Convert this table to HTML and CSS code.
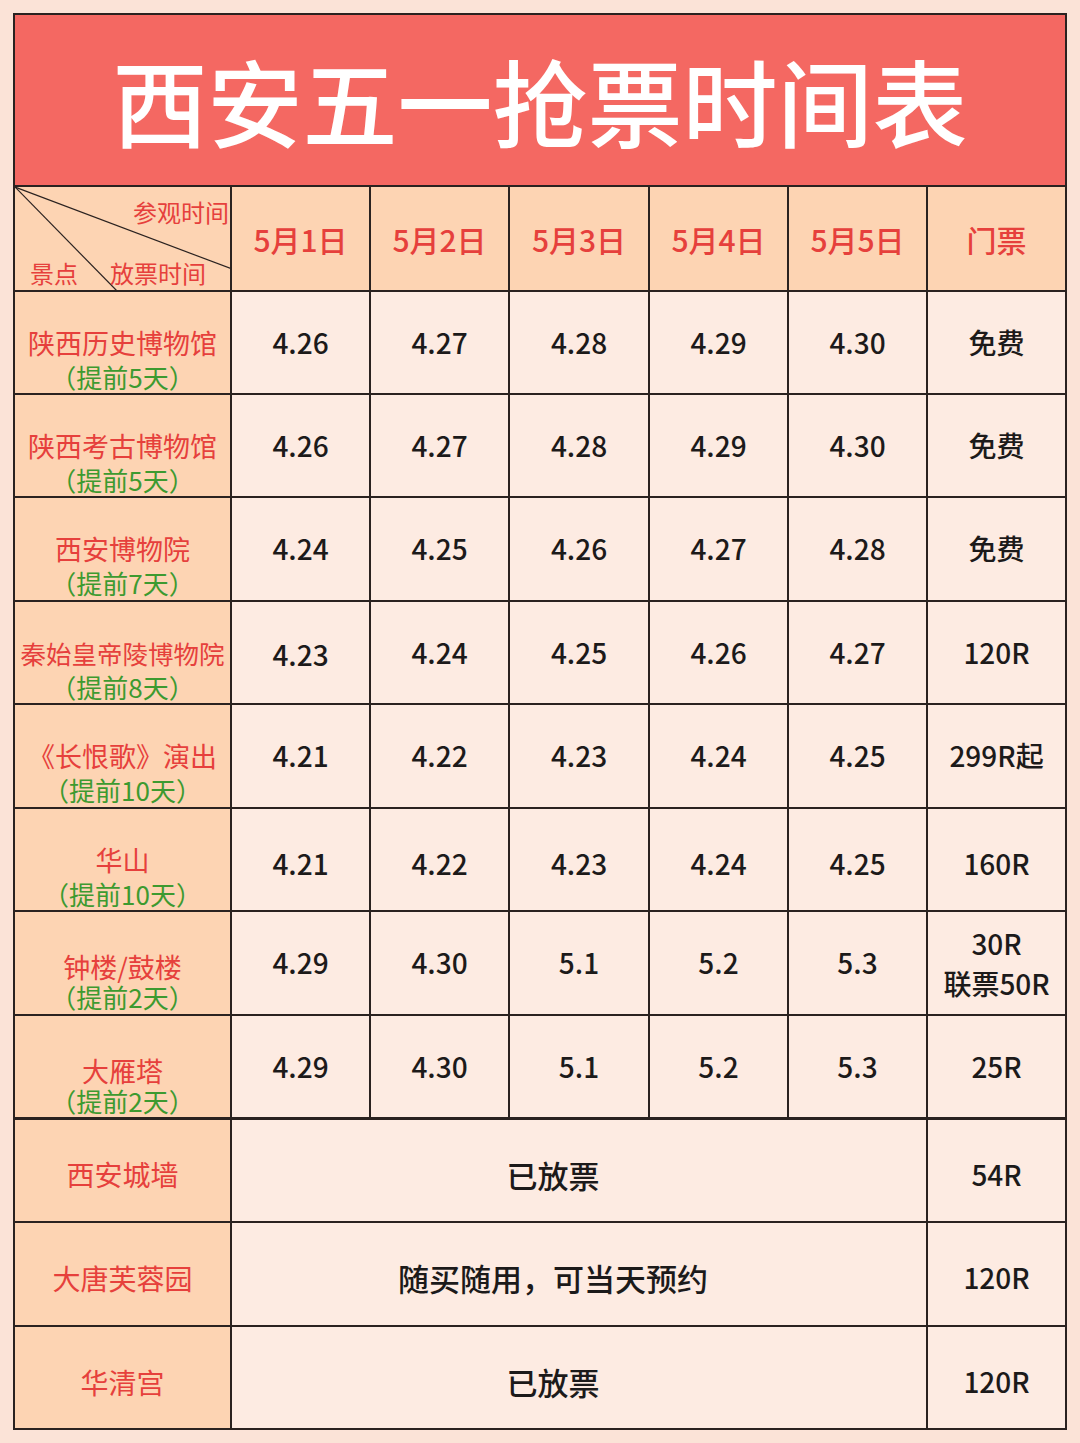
FILE: index.html
```html
<!DOCTYPE html>
<html lang="zh">
<head>
<meta charset="utf-8">
<link rel="stylesheet" href="styles.css">
</head>
<body>
<div class="page">
<table class="sheet">
  <colgroup>
    <col class="c-name"><col class="c-d"><col class="c-d"><col class="c-d4"><col class="c-d"><col class="c-d"><col class="c-d">
  </colgroup>
  <tr class="r-title"><td colspan="7" class="title">西安五一抢票时间表</td></tr>
  <tr class="r-head">
    <td class="corner">
      <svg class="diag" viewBox="0 0 217 105" preserveAspectRatio="none" width="217" height="105">
        <line x1="0" y1="0" x2="217" y2="82" stroke="#2a2220" stroke-width="1.2"/>
        <line x1="0" y1="0" x2="103" y2="105" stroke="#2a2220" stroke-width="1.2"/>
      </svg>
      <span class="lab lab-visit">参观时间</span>
      <span class="lab lab-spot">景点</span>
      <span class="lab lab-open">放票时间</span>
    </td>
    <td class="hd">5月1日</td><td class="hd">5月2日</td><td class="hd">5月3日</td><td class="hd">5月4日</td><td class="hd">5月5日</td><td class="hd">门票</td>
  </tr>
  <tr class="r103">
    <td class="name"><div class="nm">陕西历史博物馆</div><div class="adv">（提前5天）</div></td>
    <td class="v">4.26</td><td class="v">4.27</td><td class="v">4.28</td><td class="v">4.29</td><td class="v">4.30</td><td class="v">免费</td>
  </tr>
  <tr class="r103">
    <td class="name"><div class="nm">陕西考古博物馆</div><div class="adv">（提前5天）</div></td>
    <td class="v">4.26</td><td class="v">4.27</td><td class="v">4.28</td><td class="v">4.29</td><td class="v">4.30</td><td class="v">免费</td>
  </tr>
  <tr class="r104">
    <td class="name"><div class="nm">西安博物院</div><div class="adv">（提前7天）</div></td>
    <td class="v">4.24</td><td class="v">4.25</td><td class="v">4.26</td><td class="v">4.27</td><td class="v">4.28</td><td class="v">免费</td>
  </tr>
  <tr class="r103">
    <td class="name"><div class="nm nm-long">秦始皇帝陵博物院</div><div class="adv">（提前8天）</div></td>
    <td class="v v-low">4.23</td><td class="v">4.24</td><td class="v">4.25</td><td class="v">4.26</td><td class="v">4.27</td><td class="v">120R</td>
  </tr>
  <tr class="r104">
    <td class="name"><div class="nm">《长恨歌》演出</div><div class="adv">（提前10天）</div></td>
    <td class="v">4.21</td><td class="v">4.22</td><td class="v">4.23</td><td class="v">4.24</td><td class="v">4.25</td><td class="v">299R起</td>
  </tr>
  <tr class="r103">
    <td class="name"><div class="nm">华山</div><div class="adv">（提前10天）</div></td>
    <td class="v v-lower">4.21</td><td class="v v-lower">4.22</td><td class="v v-lower">4.23</td><td class="v v-lower">4.24</td><td class="v v-lower">4.25</td><td class="v v-lower">160R</td>
  </tr>
  <tr class="r104">
    <td class="name tight"><div class="nm">钟楼/鼓楼</div><div class="adv">（提前2天）</div></td>
    <td class="v">4.29</td><td class="v">4.30</td><td class="v">5.1</td><td class="v">5.2</td><td class="v">5.3</td><td class="v two">30R<br>联票50R</td>
  </tr>
  <tr class="r103 thick">
    <td class="name tight"><div class="nm">大雁塔</div><div class="adv">（提前2天）</div></td>
    <td class="v">4.29</td><td class="v">4.30</td><td class="v">5.1</td><td class="v">5.2</td><td class="v">5.3</td><td class="v">25R</td>
  </tr>
  <tr class="r104 low-row">
    <td class="name single">西安城墙</td>
    <td class="v wide" colspan="5">已放票</td><td class="v">54R</td>
  </tr>
  <tr class="r104 low-row">
    <td class="name single">大唐芙蓉园</td>
    <td class="v wide" colspan="5">随买随用，可当天预约</td><td class="v">120R</td>
  </tr>
  <tr class="r103 low-row">
    <td class="name single">华清宫</td>
    <td class="v wide" colspan="5">已放票</td><td class="v">120R</td>
  </tr>
</table>
</div>
</body>
</html>
```

FILE: styles.css
```css
html, body {
  margin: 0;
  padding: 0;
}
body {
  background: #fbe3d7;
  font-family: "Noto Sans CJK SC", "Noto Sans", sans-serif;
  width: 1080px;
  height: 1443px;
  overflow: hidden;
}
.page {
  padding: 13px 0 0 13px;
}
.sheet {
  border-collapse: collapse;
  table-layout: fixed;
  width: 1054px;
}
.c-name { width: 217px; }
.c-d { width: 139px; }
.c-d4 { width: 140px; }

.sheet td {
  border: 2px solid #2a2220;
  padding: 0;
  text-align: center;
  vertical-align: middle;
}
.r-title { height: 172px; }
.r-head { height: 105px; }
.r103 { height: 103px; }
.r104 { height: 104px; }
.thick td { border-bottom-width: 3px; }

.title {
  background: #f46862;
  color: #ffffff;
  font-size: 95px;
  font-weight: 500;
  line-height: 1;
  white-space: nowrap;
  padding-bottom: 2px !important;
}

.corner {
  position: relative;
  background: #fdd4b3;
}
.diag {
  position: absolute;
  left: 0;
  top: 0;
  display: block;
}
.lab {
  position: absolute;
  color: #e6403c;
  font-size: 24px;
  line-height: 1;
  white-space: nowrap;
}
.lab-visit { right: 1px; top: 13px; }
.lab-spot { left: 15px; bottom: 5px; }
.lab-open { left: 95px; bottom: 5px; }

.hd {
  background: #fdd4b3;
  color: #e6403c;
  font-size: 30px;
  font-weight: 500;
}

.name {
  background: #fdd4b3;
  vertical-align: top !important;
  padding-top: 33px !important;
}
.name.tight {
  padding-top: 40px !important;
}
.name.single {
  vertical-align: middle !important;
  color: #e6403c;
  font-size: 28px;
}
.nm {
  color: #e6403c;
  font-size: 27px;
  line-height: 36px;
  white-space: nowrap;
}
.nm-long {
  font-size: 25.5px;
}
.adv {
  color: #3d9a30;
  font-size: 26px;
  line-height: 32px;
  white-space: nowrap;
}
.tight .nm { line-height: 30px; }
.tight .adv { line-height: 30px; }

.v {
  background: #fdebe2;
  color: #1c1a1a;
  font-size: 28px;
  font-weight: 500;
  line-height: 1.4;
}
.v-low { padding-top: 4px !important; }
.v-lower { padding-top: 8px !important; }
.two { line-height: 40px; }
.wide {
  font-size: 31px;
  padding-right: 52px !important;
}
.low-row td { padding-top: 8px !important; }
```
